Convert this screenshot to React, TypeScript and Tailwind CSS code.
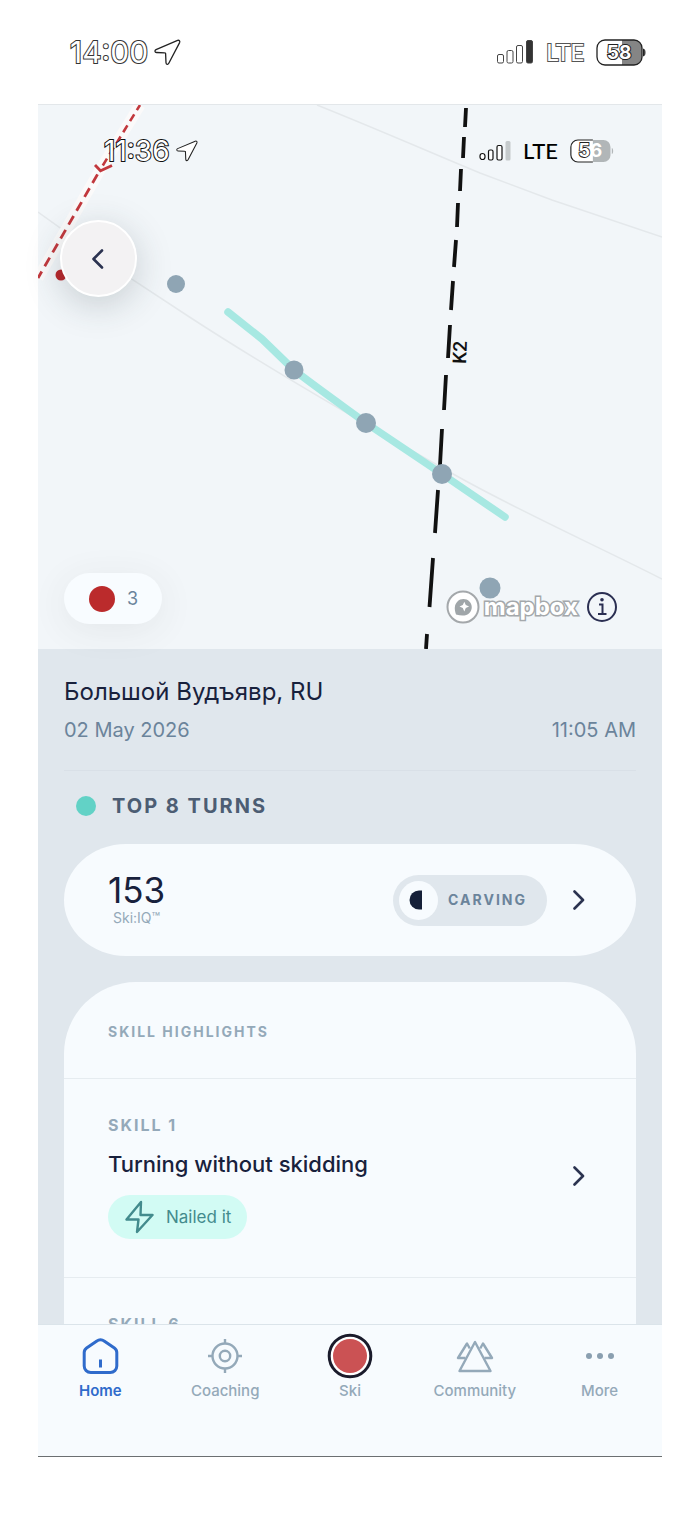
import React from 'react';

const tabs = [
  { label: 'Home', icon: <HomeIcon />, active: true },
  { label: 'Coaching', icon: <CoachingIcon />, active: false },
  { label: 'Ski', icon: <SkiIcon />, active: false },
  { label: 'Community', icon: <CommunityIcon />, active: false },
  { label: 'More', icon: <MoreIcon />, active: false },
];

function HomeIcon() {
  return (
    <svg width="38" height="38" viewBox="0 0 38 38" fill="none" stroke="#2f6bcb" strokeWidth="3" aria-hidden="true">
      <path d="M15.5 4.2 5.6 11.1A5.5 5.5 0 0 0 3.2 15.6V29a6.5 6.5 0 0 0 6.5 6.5h19.6a6.5 6.5 0 0 0 6.5-6.5V15.6a5.5 5.5 0 0 0-2.4-4.5L23.5 4.2a7 7 0 0 0-8 0Z" />
      <path d="M19.5 22.5v8" />
    </svg>
  );
}

function CoachingIcon() {
  return (
    <svg width="36" height="36" viewBox="0 0 36 36" fill="none" stroke="#94a9b9" strokeWidth="2.4" aria-hidden="true">
      <circle cx="18" cy="18" r="12.5" />
      <circle cx="18" cy="18" r="5.2" />
      <path d="M18 1v5M18 30v5M1 18h5M30 18h5" />
    </svg>
  );
}

function SkiIcon() {
  return (
    <svg width="46" height="46" viewBox="0 0 46 46" aria-hidden="true">
      <circle cx="23" cy="23" r="20.8" fill="#fff" stroke="#1a1b2b" strokeWidth="3" />
      <circle cx="23" cy="23" r="17" fill="#cb5254" />
    </svg>
  );
}

function CommunityIcon() {
  return (
    <svg width="38" height="36" viewBox="0 0 38 36" fill="none" stroke="#94a9b9" strokeWidth="2.4" strokeLinejoin="round" aria-hidden="true">
      <path d="M19 4 3.5 33h31L19 4Z" />
      <path d="M13.8 10.5 11 5.5 2 20h7.5M24.2 10.5 27 5.5l9 14.5h-7.5" />
    </svg>
  );
}

function MoreIcon() {
  return (
    <svg width="30" height="8" viewBox="0 0 30 8" fill="#8a9fb0" aria-hidden="true">
      <circle cx="4" cy="4" r="3" />
      <circle cx="15" cy="4" r="3" />
      <circle cx="26" cy="4" r="3" />
    </svg>
  );
}

const ChevronRight: React.FC = () => (
  <svg width="12" height="22" viewBox="0 0 12 22" fill="none" stroke="#2b3350" strokeWidth="2.6" strokeLinecap="round" strokeLinejoin="round" aria-hidden="true">
    <path d="m1.5 2.500 8.500 8.500-8.500 8.500" />
  </svg>
);

const LocationArrow: React.FC<{ className: string }> = ({ className }) => (
  <svg className={className} viewBox="0 0 27 27" fill="#fff" stroke="#222" strokeWidth="1.3" strokeLinejoin="round" aria-hidden="true">
    <path d="M23.6 1.4 2 10.6c-1.6.8-1.3 2.8.5 2.9l8.3.3c.6 0 .8.2.8.8l.4 9.2c.1 1.8 2 2.1 2.8.5L25.6 3.6c.7-1.500-.5-2.800-2-2.200Z" />
  </svg>
);

const Battery: React.FC<{ level: string; className: string; dim?: boolean }> = ({ level, className, dim }) => (
  <svg className={className} viewBox="0 0 50 27" role="img" aria-label={`Battery ${level}`}>
    <rect x="1" y="1" width="45" height="25" rx="8" fill={dim ? '#b1b6b8' : '#858585'} />
    <path d="M26 1H9a8 8 0 0 0-8 8v9a8 8 0 0 0 8 8h17Z" fill="#fff" />
    <path
      d={dim ? 'M26 1H9a8 8 0 0 0-8 8v9a8 8 0 0 0 8 8h17' : 'M9 1h29a8 8 0 0 1 8 8v9a8 8 0 0 1-8 8H9a8 8 0 0 1-8-8V9a8 8 0 0 1 8-8Z'}
      fill="none"
      stroke="#222"
      strokeWidth="1.3"
    />
    <path d="M47.500 10v7c2-.5 2-6.500 0-7Z" fill={dim ? '#b1b6b8' : '#555'} stroke={dim ? 'none' : '#222'} />
    <text x="23" y="20" textAnchor="middle" fontFamily="Inter, sans-serif" fontSize={dim ? 21 : 19} fontWeight="700" fill="#fff" stroke="#222" strokeWidth="2" paintOrder="stroke">
      {dim ? (
        <>
          {level[0]}
          <tspan stroke="none">{level[1]}</tspan>
        </>
      ) : (
        level
      )}
    </text>
  </svg>
);

const OuterStatusBar: React.FC = () => (
  <header className="flex h-26 shrink-0 items-center justify-between pl-8 pr-[16px]">
    <div className="flex items-center gap-1.5">
      <span className="text-[30px] leading-9 text-white [-webkit-text-stroke:2px_#333] [paint-order:stroke]">14:00</span>
      <LocationArrow className="size-[27px]" />
    </div>
    <div className="flex items-center gap-3">
      <svg className="h-6 w-[37px]" viewBox="0 0 37 24" fill="#fff" stroke="#444" aria-hidden="true">
        <rect x=".5" y="14.500" width="6" height="8.500" rx="1.500" />
        <rect x="10" y="10.500" width="6" height="12.500" rx="1.500" />
        <rect x="19.500" y="5.500" width="6" height="17.500" rx="1.500" />
        <rect x="29.500" y=".5" width="6" height="22.500" rx="1.500" fill="#333" />
      </svg>
      <span className="font-['Lato',sans-serif] text-[24px] leading-9 text-white [-webkit-text-stroke:2px_#555] [paint-order:stroke]">LTE</span>
      <Battery level="58" className="h-[27px] w-[50px]" />
    </div>
  </header>
);

const MapDrawing: React.FC = () => (
  <svg className="block w-full [grid-area:1/1]" viewBox="0 0 624 544" fill="none" role="img" aria-label="Run map">
    <rect width="624" height="544" fill="#f2f6f9" />
    <g stroke="#e4e8eb" strokeWidth="1.500">
      <path d="M0 107 95 175l58 38c80 52 170 104 264 157 60 34 140 70 207 104" />
      <path d="M279 0c60 24 110 46 163 68l72 27 110 37" />
    </g>
    <path d="M102 0 62 65 0 173" stroke="#fbfafa" strokeWidth="11" />
    <path d="m102 0-40 65" stroke="#c2383d" strokeWidth="2.600" strokeDasharray="8 5" strokeDashoffset="2" />
    <path d="M62 65 0 173" stroke="#c2383d" strokeWidth="2.800" strokeDasharray="10 6" strokeDashoffset="-5" />
    <path d="m57 60 5.500 5.700L74 60.500" stroke="#c2383d" strokeWidth="2.800" />
    <circle cx="23" cy="170" r="5.500" fill="#b8272b" />
    <path
      d="m428 3-1 19m-1 10-1 21m-2 11-1 22m-2 12-1 24m-1 13-2 27m-1 14-2 29m-1 15-2 33m-2 17-2 35m-2 19-2 36m-2 25-3 43m-2 25-3.500 49m-2.500 27-1 15"
      stroke="#111"
      strokeWidth="3.800"
    />
    <text transform="translate(428 259) rotate(-88)" fontFamily="'Roboto', sans-serif" fontSize="19" fontWeight="500" fill="#111">
      K2
    </text>
    <path d="m190 207 34 27 32 31c22 17 46 34 72 53l76 51 63 43" stroke="#a7e8e2" strokeWidth="7.500" strokeLinecap="round" strokeLinejoin="round" />
    <g fill="#8fa5b4">
      <circle cx="138" cy="179" r="9" />
      <circle cx="256" cy="265" r="9.500" />
      <circle cx="328" cy="318" r="10" />
      <circle cx="404" cy="369" r="10" />
      <circle cx="452" cy="483" r="10.500" />
    </g>
  </svg>
);

const MapPanel: React.FC = () => (
  <section className="grid shrink-0 border-t border-[#e3e7ea] bg-[#f2f6f9]">
    <MapDrawing />
    <div className="relative flex flex-col justify-between [grid-area:1/1] px-[22px] pb-[25px] pt-7">
      <div>
        <div className="flex items-center justify-between pl-11 pr-[26px]">
          <div className="flex items-center gap-1.5">
            <span className="text-[28px] leading-9 text-white [-webkit-text-stroke:2px_#111] [paint-order:stroke]">11:36</span>
            <LocationArrow className="size-[22px]" />
          </div>
          <div className="flex items-center gap-3">
            <svg className="h-5 w-8" viewBox="0 0 32 20" fill="#fff" stroke="#111" strokeWidth="1.200" aria-hidden="true">
              <rect x="1" y="12.500" width="5" height="6" rx="2.500" />
              <rect x="9.500" y="9" width="4.500" height="10" rx="1.500" />
              <rect x="18" y="4.500" width="5" height="14.500" rx="1.500" />
              <rect x="26.500" y="0" width="5" height="19.500" rx="1.500" fill="#c5cacc" stroke="none" />
            </svg>
            <span className="font-['Lato',sans-serif] text-[22px] font-medium leading-9 text-black">LTE</span>
            <Battery level="56" className="h-6 w-11" dim />
          </div>
        </div>
        <button
          type="button"
          aria-label="Back"
          className="mt-[51px] flex size-[77px] items-center justify-center rounded-full border-2 border-white bg-[#f3f2f3] shadow-[0_8px_36px_rgba(40,60,70,0.22)]"
        >
          <svg width="14" height="20" viewBox="0 0 14 20" fill="none" stroke="#2b3350" strokeWidth="2.600" strokeLinecap="round" strokeLinejoin="round" aria-hidden="true">
            <path d="m10 1.500-8.500 8.500 8.500 8.500" />
          </svg>
        </button>
      </div>
      <div className="flex items-center justify-between pl-1 pr-[22px]">
        <div className="flex h-[51px] items-center gap-3 rounded-full bg-[#f8fcff] pl-[25px] pr-6 shadow-[0_6px_36px_rgba(60,60,60,0.08)]">
          <span className="size-[26px] rounded-full bg-[#bb2b2c]" />
          <span className="text-[18px] leading-6 text-[#6b849b]">3</span>
        </div>
        <div className="flex items-center gap-1 pt-4">
          <svg width="34" height="34" viewBox="0 0 34 34" aria-hidden="true">
            <circle cx="17" cy="17" r="15.500" fill="#fff" stroke="#a4a8ab" strokeWidth="2" />
            <path d="M10 24.500c-2-6-1.500-10 1.500-13 3.200-3.200 8.700-3.200 11.900 0s3.200 8.300 0 11.500c-3 3-7.500 3.300-13.400 1.500Z" fill="#a0a6a9" />
            <path d="m18.300 11.800 1.500 3.300 3.300 1.500-3.300 1.500-1.500 3.300-1.500-3.300-3.300-1.500 3.300-1.500Z" fill="#fff" />
          </svg>
          <span className="text-[24px] font-bold leading-8 text-white [-webkit-text-stroke:3px_#a4a8ab] [paint-order:stroke]">mapbox</span>
          <button type="button" aria-label="Map information" className="ml-1">
            <svg width="32" height="32" viewBox="0 0 32 32" fill="none" stroke="#2b2f52" strokeWidth="2" aria-hidden="true">
              <circle cx="16" cy="16" r="14" />
              <path d="M13 13.500h3.500V23M12 23h8.500" />
              <circle cx="16" cy="8.800" r="1.800" fill="#2b2f52" stroke="none" />
            </svg>
          </button>
        </div>
      </div>
    </div>
  </section>
);

const RunSummary: React.FC = () => (
  <main className="min-h-0 flex-1 overflow-hidden bg-[#e0e7ed] px-[26px] pt-[25px]">
    <h1 className="text-[24px] leading-9 text-[#18213c]">Большой Вудъявр, RU</h1>
    <div className="mt-1.5 flex justify-between border-b border-[#d9e0e7] pb-[26px] text-[20px] leading-7 text-[#6b849b]">
      <span>02 May 2026</span>
      <span>11:05 AM</span>
    </div>

    <div className="mt-[21px] flex items-center gap-4 pl-3">
      <span className="size-5 rounded-full bg-[#62d2c6]" />
      <h2 className="text-[20px] font-bold leading-7 tracking-widest text-[#4c5d73]">TOP 8 TURNS</h2>
    </div>

    <a href="#ski-iq" className="mt-6 flex h-28 items-center justify-between bg-[#f7fbfe] pl-11 pr-[51px] [border-radius:62px/56px]">
      <div className="flex flex-col items-center">
        <span className="text-[35px] leading-9 text-[#18213c]">153</span>
        <span className="text-[14px] leading-5 text-[#94a9b9]">Ski:IQ™</span>
      </div>
      <div className="flex items-center gap-[26px]">
        <div className="flex h-[51px] items-center gap-2.5 rounded-full bg-[#e0e7ed] pl-1.5 pr-5">
          <span className="flex size-[39px] items-center justify-center rounded-full bg-[#f7fbfe]">
            <svg width="20" height="20" viewBox="0 0 20 20" fill="#152038" aria-hidden="true">
              <path d="M13 .5V19.500H10a9.500 9.500 0 0 1 0-19Z" />
            </svg>
          </span>
          <span className="text-[14px] font-bold leading-5 tracking-[2px] text-[#6b849b]">CARVING</span>
        </div>
        <ChevronRight />
      </div>
    </a>

    <section className="mt-[26px] overflow-hidden rounded-t-[72px] bg-[#f7fbfe]">
      <h3 className="border-b border-[#e6ecf0] pb-9 pl-11 pt-10 text-[14px] font-bold leading-5 tracking-[2px] text-[#94a9b9]">SKILL HIGHLIGHTS</h3>
      <a href="#skill-1" className="flex items-center justify-between border-b border-[#e6ecf0] pb-[38px] pl-11 pr-[51px] pt-[34px]">
        <div>
          <p className="text-[16px] font-bold leading-6 tracking-[2px] text-[#94a9b9]">SKILL 1</p>
          <p className="mt-3 text-[22px] font-medium leading-[30px] text-[#18213c]">Turning without skidding</p>
          <div className="mt-4 flex h-11 w-fit items-center gap-3 rounded-full bg-[#d2fbf4] px-4 text-[#438b8d]">
            <svg width="30" height="34" viewBox="0 0 30 34" fill="none" stroke="currentColor" strokeWidth="2.400" strokeLinejoin="round" aria-hidden="true">
              <path d="M17 2 2.500 19.500H14.500L13 32l15.500-17H16.500L17 2Z" />
            </svg>
            <span className="text-[17px] leading-6">Nailed it</span>
          </div>
        </div>
        <ChevronRight />
      </a>
      <a href="#skill-6" className="block pb-[38px] pl-11 pt-[34px]">
        <p className="text-[16px] font-bold leading-6 tracking-[2px] text-[#94a9b9]">SKILL 6</p>
      </a>
    </section>
  </main>
);

const TabBar: React.FC = () => (
  <nav className="grid shrink-0 grid-cols-5 border-b border-t border-b-[#6b6f71] border-t-[#dbe4ea] bg-[#f7fbfe] pb-[55px] pt-[7px]">
    {tabs.map((tab) => (
      <a key={tab.label} href={`#${tab.label.toLowerCase()}`} className="flex flex-col items-center">
        <span className="flex h-12 items-center">{tab.icon}</span>
        <span className={tab.active ? 'pt-px text-[15px] font-semibold leading-5 text-[#2f6bcb]' : 'pt-px text-[15px] font-medium leading-5 text-[#94a9b9]'}>
          {tab.label}
        </span>
      </a>
    ))}
  </nav>
);

const App: React.FC = () => {
  return (
    <div className="flex h-screen flex-col bg-white px-[38px] pb-[60px] font-['Inter',sans-serif]">
      <OuterStatusBar />
      <MapPanel />
      <RunSummary />
      <TabBar />
    </div>
  );
};

export default App;
